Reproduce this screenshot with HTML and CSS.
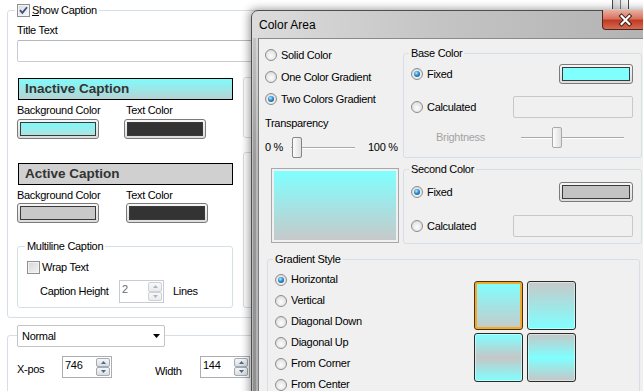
FILE: index.html
```html
<!DOCTYPE html>
<html>
<head>
<meta charset="utf-8">
<link rel="stylesheet" href="styles.css">
</head>
<body>
<div class="panel">
  <div class="group g1">
    <div class="legend lg1">
      <span class="cb"><svg width="11" height="11" viewBox="0 0 11 11"><path class="chk" d="M2 5.2 L4.4 7.8 L9 2.2"/></svg></span>
      <span><u>S</u>how Caption</span>
    </div>
    <div class="title-lbl">Title Text</div>
    <div class="textbox"></div>
    <div class="g1-cols">
      <div class="g1-left">
        <div class="capbar inactive">Inactive Caption</div>
        <div class="pair-labels"><span>Background Color</span><span>Text Color</span></div>
        <div class="pair-btns">
          <span class="cbtn lbtn"><span class="sw sw-cyan"></span></span>
          <span class="cbtn lbtn shift"><span class="sw sw-dark"></span></span>
        </div>
        <div class="capbar active">Active Caption</div>
        <div class="pair-labels lab2"><span>Background Color</span><span>Text Color</span></div>
        <div class="pair-btns btn2">
          <span class="cbtn lbtn"><span class="sw sw-gray"></span></span>
          <span class="cbtn lbtn"><span class="sw sw-dark"></span></span>
        </div>
        <div class="group multi">
          <div class="legend lg-multi">Multiline Caption</div>
          <div class="wrap-row"><span class="cb off"></span><span>Wrap Text</span></div>
          <div class="ch-row">
            <span class="ch-lbl">Caption Height</span>
            <span class="spin dis ch-spin">
              <span class="spin-val">2</span>
              <span class="spin-btns">
                <span class="sb"><svg width="5" height="3" viewBox="0 0 5 3"><path d="M0 3 L2.5 0 L5 3Z"/></svg></span>
                <span class="sb"><svg width="5" height="3" viewBox="0 0 5 3"><path d="M0 0 L5 0 L2.5 3Z"/></svg></span>
              </span>
            </span>
            <span class="lines">Lines</span>
          </div>
        </div>
      </div>
      <div class="g1-right">
        <div class="group ga"></div>
        <div class="group gb"></div>
      </div>
    </div>
  </div>
  <div class="group g2">
    <div class="legend lg-dd">
      <span class="dd"><span>Normal</span><svg class="dd-arrow" width="7" height="4" viewBox="0 0 7 4"><path d="M0 0 L7 0 L3.5 4Z"/></svg></span>
    </div>
    <div class="pos-row">
      <span class="pos-lbl">X-pos</span>
      <span class="spin num">
        <span class="spin-val">746</span>
        <span class="spin-btns">
          <span class="sb"><svg width="5" height="3" viewBox="0 0 5 3"><path d="M0 3 L2.5 0 L5 3Z"/></svg></span>
          <span class="sb"><svg width="5" height="3" viewBox="0 0 5 3"><path d="M0 0 L5 0 L2.5 3Z"/></svg></span>
        </span>
      </span>
      <span class="pos-lbl wlbl">Width</span>
      <span class="spin num">
        <span class="spin-val">144</span>
        <span class="spin-btns">
          <span class="sb"><svg width="5" height="3" viewBox="0 0 5 3"><path d="M0 3 L2.5 0 L5 3Z"/></svg></span>
          <span class="sb"><svg width="5" height="3" viewBox="0 0 5 3"><path d="M0 0 L5 0 L2.5 3Z"/></svg></span>
        </span>
      </span>
    </div>
  </div>
</div>

<div class="behind"><span></span></div>

<div class="dialog">
  <div class="titlebar">
    <span class="title">Color Area</span>
    <span class="close"><svg width="43" height="20" viewBox="0 0 43 20"><path class="xo" d="M20 6 L28 14 M28 6 L20 14"/><path class="xi" d="M20 6 L28 14 M28 6 L20 14"/></svg></span>
  </div>
  <div class="frame">
    <div class="client">
      <div class="top">
        <div class="leftcol">
          <div class="rrow"><span class="radio"></span><span>Solid Color</span></div>
          <div class="rrow"><span class="radio"></span><span>One Color Gradient</span></div>
          <div class="rrow"><span class="radio on"></span><span>Two Colors Gradient</span></div>
          <div class="trans-lbl">Transparency</div>
          <div class="trans-row">
            <span class="t0">0 %</span>
            <span class="slider s-trans"><span class="track"></span><span class="thumb" style="margin-left:1px"></span></span>
            <span class="t100">100 %</span>
          </div>
          <div class="preview"><div class="preview-fill"></div></div>
        </div>
        <div class="rightcol">
          <div class="dgroup base">
            <div class="legend dlg">Base Color</div>
            <div class="crow r1"><span class="radio on"></span><span>Fixed</span><span class="cbtn dbtn"><span class="sw sw-aqua"></span></span></div>
            <div class="crow r2"><span class="radio"></span><span>Calculated</span><span class="dis-box"></span></div>
            <div class="crow r3"><span class="gray">Brightness</span><span class="slider s-bright"><span class="track"></span><span class="thumb dim" style="margin-left:31px"></span></span></div>
          </div>
          <div class="dgroup second">
            <div class="legend dlg">Second Color</div>
            <div class="crow r1b"><span class="radio on"></span><span>Fixed</span><span class="cbtn dbtn"><span class="sw sw-silver"></span></span></div>
            <div class="crow r2b"><span class="radio"></span><span>Calculated</span><span class="dis-box"></span></div>
          </div>
        </div>
      </div>
      <div class="dgroup grad">
        <div class="legend dlg">Gradient Style</div>
        <div class="grad-body">
          <div class="glist">
            <div class="grow"><span class="radio on"></span><span>Horizontal</span></div>
            <div class="grow"><span class="radio"></span><span>Vertical</span></div>
            <div class="grow"><span class="radio"></span><span>Diagonal Down</span></div>
            <div class="grow"><span class="radio"></span><span>Diagonal Up</span></div>
            <div class="grow"><span class="radio"></span><span>From Corner</span></div>
            <div class="grow"><span class="radio"></span><span>From Center</span></div>
          </div>
          <div class="tiles">
            <span class="tile t1"></span>
            <span class="tile t2"></span>
            <span class="tile t3"></span>
            <span class="tile t4"></span>
          </div>
        </div>
      </div>
    </div>
  </div>
</div>
</body>
</html>
```

FILE: styles.css
```css
* { box-sizing: border-box; }
html, body { margin: 0; padding: 0; }
body {
  width: 643px;
  height: 391px;
  overflow: hidden;
  position: relative;
  background: #fff;
  font-family: "Liberation Sans", Arial, sans-serif;
  font-size: 11px;
  line-height: 13px;
  letter-spacing: -0.3px;
  color: #000;
}

/* ---------- left panel ---------- */
.panel { padding: 10px 0 0 7px; width: 700px; }
.group { border: 1px solid #d5dfe5; border-radius: 3px; }
.legend {
  display: flex;
  align-items: center;
  width: max-content;
  height: 13px;
  margin-top: -7px;
  padding: 0 2px;
  background: #fff;
}
.g1 { width: 560px; padding: 0 0 9px 9px; }
.lg1 { margin-left: -2px; gap: 2px; }

.cb {
  width: 13px; height: 13px;
  border: 1px solid #8e8f8f;
  background: linear-gradient(135deg, #dadada, #f9f9f9);
  box-shadow: inset 0 0 0 1px #f3f3f3;
  display: flex; align-items: center; justify-content: center;
  flex: none;
}
.chk { fill: none; stroke: #3b4e87; stroke-width: 1.8; }

.title-lbl { margin-top: 7px; }
.textbox {
  margin-top: 3px;
  width: 420px; height: 22px;
  border: 1px solid #c8ccd2;
  border-top-color: #b5b9bf;
  border-radius: 2px;
}
.g1-cols { display: flex; }
.g1-left { width: 216px; margin-top: 16px; }
.capbar {
  margin-left: 1px;
  width: 215px; height: 22px;
  border: 1px solid #000;
  padding-left: 6px;
  font-weight: bold;
  font-size: 13.5px;
  line-height: 20px;
  letter-spacing: 0;
  color: #333;
}
.capbar.inactive { background: linear-gradient(#80fbfb, #b6d3d3); }
.capbar.active { background: #d0d0d0; margin-top: 24px; }

.pair-labels { display: grid; grid-template-columns: 109px auto; margin-top: 4px; }
.pair-btns { display: grid; grid-template-columns: 107px auto; margin-top: 2px; }
.btn2 { margin-top: 1px; grid-template-columns: 109px auto; }

.cbtn {
  display: block;
  height: 20px;
  border: 1px solid #7a7a7a;
  border-radius: 3px;
  padding: 2px;
  background: linear-gradient(#f6f6f6, #dcdcdc);
}
.lbtn { width: 82px; }
.sw { display: block; height: 100%; border: 1px solid #3a3a3a; }
.sw-cyan { background: linear-gradient(#80f8f8, #aee3e3); }
.sw-dark { background: #333; }
.sw-gray { background: #c9c9c9; }
.sw-aqua { background: #80ffff; }
.sw-silver { background: #c3c3c3; }

.multi { margin-top: 23px; width: 216px; padding-bottom: 4px; }
.lg-multi { margin-left: 7px; }
.wrap-row { display: flex; align-items: center; gap: 2px; margin-top: 8px; padding-left: 9px; height: 13px; }
.cb.off { background: linear-gradient(135deg, #d6d6d6, #f4f4f4); }
.ch-row { display: flex; align-items: center; margin-top: 6px; padding-left: 22px; height: 23px; }
.ch-lbl { width: 79px; }
.lines { margin-left: 9px; }

.spin {
  display: flex;
  border: 1px solid #abadb3;
  background: #fff;
  padding: 1px;
}
.spin-val { flex: 1; padding: 1px 0 0 1px; }
.spin-btns { width: 14px; display: flex; flex-direction: column; }
.sb {
  flex: 1;
  border: 1px solid #a3abb5;
  border-radius: 2px;
  background: linear-gradient(#f6f6f6, #dadde0);
  display: flex; align-items: center; justify-content: center;
}
.sb svg { fill: #4b6890; }
.ch-spin { width: 45px; height: 23px; border-color: #c6ccd3; }
.spin.dis .spin-val { color: #6d6d6d; }
.spin.dis .sb { border-color: #ccd2d8; background: linear-gradient(#f8f8f8, #eaeaea); }
.spin.dis .sb svg { fill: #aab6c3; }

.g1-right { margin-left: 10px; flex: 1; }
.ga { margin-top: 15px; height: 61px; }
.gb { margin-top: 14px; height: 156px; }

.g2 { margin-top: 17px; width: 560px; height: 120px; padding-left: 9px; }
.lg-dd { height: 22px; margin-top: -11px; padding: 0; background: transparent; }
.dd {
  display: flex; align-items: center;
  width: 148px; height: 22px;
  border: 1px solid #c4c4c4;
  border-radius: 2px;
  background: #fff;
  padding-left: 4px;
}
.dd-arrow { margin-left: auto; margin-right: 4px; fill: #000; }
.pos-row { display: flex; align-items: flex-start; margin-top: 9px; }
.pos-lbl { width: 45px; margin-top: 7px; }
.wlbl { margin-left: 43px; margin-top: 9px; }
.spin.num { width: 50px; height: 22px; }

/* ---------- window behind (top strip) ---------- */
.behind {
  position: absolute;
  left: 612px; top: 0;
  width: 17px; height: 9px;
  border-left: 1px solid #4a4a4a;
  border-right: 1px solid #4a4a4a;
  display: flex; justify-content: center;
  background: linear-gradient(to right, #dedede, #f4f4f4);
}
.behind span { width: 1px; background: #7a7a7a; }

/* ---------- dialog ---------- */
.dialog {
  position: absolute;
  left: 251px; top: 10px;
  width: 420px; height: 400px;
  border: 1px solid #4f4f4f;
  border-radius: 7px 7px 0 0;
  background: linear-gradient(to right, #dcdcdc, #c4c4c4 45%, #b1b1b1);
  display: flex; flex-direction: column;
  box-shadow: -2px -1px 9px rgba(0,0,0,0.38);
}
.titlebar { flex: none; height: 27px; display: flex; align-items: flex-start; padding-left: 7px; }
.title {
  width: 343px;
  margin-top: 7px;
  font-size: 12px; line-height: 14px; letter-spacing: 0;
  color: #000;
}
.close {
  width: 43px; height: 20px;
  margin-top: -1px;
  border: 1px solid #4d2620;
  border-top: none;
  border-radius: 0 0 4px 4px;
  background: linear-gradient(#eab0a2 0%, #d9735f 45%, #c33a22 55%, #d46a52 100%);
  display: flex;
}
.close svg { margin-left: -1px; }
.xo { stroke: #3b1c16; stroke-width: 4.2; stroke-linecap: square; fill: none; }
.xi { stroke: #fff; stroke-width: 2.2; stroke-linecap: square; fill: none; }

.frame {
  flex: 1 1 0;
  min-height: 0;
  padding-left: 6px;
  background:
    linear-gradient(to right, rgba(255,255,255,0.35) 0, rgba(255,255,255,0.35) 1px, transparent 1px, transparent 4px, rgba(255,255,255,0.3) 4px),
    linear-gradient(to bottom, #c4c4c4, #9c9c9c 120px, #8f8f8f);
}
.client {
  height: 100%;
  overflow: hidden;
  border-left: 1px solid #7d7d7d;
  border-top: 1px solid #8a8a8a;
  background: #f0f0f0;
}
.top { display: flex; padding-left: 6px; }
.leftcol { width: 138px; padding-top: 5px; }
.rrow { display: flex; align-items: center; gap: 4px; height: 22px; }

.radio {
  width: 12px; height: 12px;
  border-radius: 50%;
  border: 1px solid #8d8d8d;
  background: radial-gradient(circle at 50% 60%, #fdfdfd 0, #e7e7e7 55%, #cdcdcd 100%);
  display: flex; align-items: center; justify-content: center;
  flex: none;
}
.radio.on::after {
  content: "";
  width: 6px; height: 6px;
  border-radius: 50%;
  background: radial-gradient(circle at 40% 35%, #b6ecff 0, #2c8ed2 45%, #0b3e6a 100%);
}

.trans-lbl { margin-top: 7px; }
.trans-row { display: flex; align-items: center; height: 21px; margin-top: 7px; }
.t0 { width: 26px; }
.t100 { margin-left: 13px; }
.slider { display: grid; align-items: center; height: 21px; }
.slider > * { grid-area: 1 / 1; }
.s-trans { width: 64px; }
.track { height: 2px; border-top: 1px solid #a9a9a9; border-bottom: 1px solid #fff; }
.thumb {
  justify-self: start;
  width: 10px; height: 21px;
  border: 1px solid #858585;
  border-radius: 2px;
  background: linear-gradient(to right, #fcfcfc, #e0e0e0);
}
.thumb.dim { border-color: #a9a9a9; }

.preview {
  width: 128px; height: 75px;
  margin: 10px 0 0 6px;
  border: 1px solid #a8a8a8;
  padding: 2px;
}
.preview-fill { height: 100%; background: linear-gradient(#80ffff, #c6c9ca); }

.rightcol { width: 239px; padding-top: 14px; }
.dgroup { border: 1px solid #d5dfe5; border-radius: 3px; }
.dlg { margin-left: 5px; background: #f0f0f0; }
.crow { display: flex; align-items: center; gap: 4px; padding: 0 8px 0 7px; }
.dbtn { width: 74px; margin-left: auto; }
.dis-box {
  width: 120px; height: 22px;
  margin-left: auto;
  border: 1px solid #c8c8c8;
  border-radius: 2px;
  background: #f0f0f0;
}
.base { padding-bottom: 9px; }
.r1 { height: 20px; margin-top: 4px; }
.r2 { height: 22px; margin-top: 12px; }
.r3 { height: 21px; margin-top: 9px; padding-left: 32px; padding-right: 17px; }
.gray { color: #a3a3a3; }
.s-bright { width: 103px; margin-left: auto; }
.second { margin-top: 11px; padding-bottom: 6px; }
.r1b { height: 20px; margin-top: 6px; }
.r2b { height: 22px; margin-top: 13px; }

.grad { margin: 15px 0 0 8px; width: 373px; height: 200px; }
.grad-body { display: flex; align-items: flex-start; }
.glist { width: 206px; padding: 3px 0 0 7px; }
.grow { display: flex; align-items: center; gap: 4px; height: 21px; }
.tiles {
  display: grid;
  grid-template-columns: 49px 49px;
  gap: 3px 4px;
  margin-top: 15px;
}
.tile {
  width: 49px; height: 49px;
  border: 1px solid #2a2a2a;
  border-radius: 3px;
  box-shadow: inset 0 0 0 1px rgba(255,255,255,0.45);
}
.t1 {
  background: linear-gradient(#80ffff, #c6c9c9);
  border-color: #4a3300;
  box-shadow: inset 0 0 0 2px #f3a82e;
}
.t2 { background: linear-gradient(#c6c9c9, #80ffff); }
.t3 { background: linear-gradient(#80ffff, #c6c6c6 50%, #80ffff); }
.t4 { background: linear-gradient(#c6c6c6, #80ffff 50%, #c6c6c6); }
```
